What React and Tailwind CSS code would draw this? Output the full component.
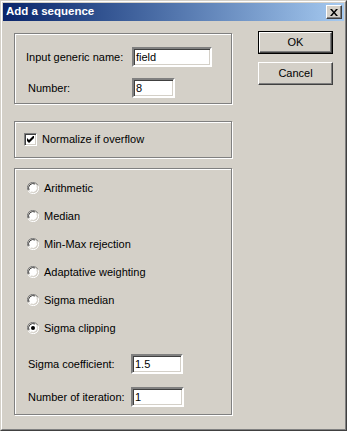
import React from 'react';

const font = { fontFamily: '"Liberation Sans", Arial, sans-serif' };

function TextBox({ value, width }) {
  return (
    <div
      className={`h-[20px] ${width} bg-white border-2 border-t-[#808080] border-l-[#808080] border-b-white border-r-white shadow-[inset_1px_1px_0_#404040,inset_-1px_-1px_0_#d4d0c8] flex items-center pl-[2px] text-[11px] text-black`}
    >
      {value}
    </div>
  );
}

function Radio({ checked, label }) {
  return (
    <div className="flex items-center h-[16px]">
      <svg width="12" height="12" viewBox="0 0 12 12" className="ml-[1px]">
        {/* outer 3D ring */}
        <path d="M1 8.5 A5.5 5.5 0 0 1 8.5 1" stroke="#808080" strokeWidth="1" fill="none" />
        <path d="M8.5 1 A5.5 5.5 0 0 1 11 3.5" stroke="#808080" strokeWidth="1" fill="none" />
        <path d="M11 3.5 A5.5 5.5 0 0 1 3.5 11" stroke="#ffffff" strokeWidth="1" fill="none" />
        <path d="M3.5 11 A5.5 5.5 0 0 1 1 8.5" stroke="#ffffff" strokeWidth="1" fill="none" />
        <circle cx="6" cy="6" r="4.5" fill="#ffffff" />
        <path d="M2 8 A4.5 4.5 0 0 1 8 2" stroke="#404040" strokeWidth="1" fill="none" />
        <path d="M10 4 A4.5 4.5 0 0 1 4 10" stroke="#d4d0c8" strokeWidth="1" fill="none" />
        {checked && <circle cx="6" cy="6" r="2" fill="#000000" />}
      </svg>
      <span className="ml-[5px] text-[11px] text-black">{label}</span>
    </div>
  );
}

function Button({ label, isDefault }) {
  return (
    <div className={`w-[75px] h-[23px] ${isDefault ? 'border border-black' : ''}`}>
      <div className="w-full h-full bg-[#d4d0c8] border border-t-white border-l-white border-b-[#404040] border-r-[#404040] shadow-[inset_-1px_-1px_0_#808080] flex items-center justify-center text-[11px] text-black">
        {label}
      </div>
    </div>
  );
}

export default function App() {
  const radios = ['Arithmetic', 'Median', 'Min-Max rejection', 'Adaptative weighting', 'Sigma median', 'Sigma clipping'];

  return (
    <div style={font} className="w-[347px] h-[431px] bg-[#d4d0c8] select-none">
      <div className="w-full h-full border border-t-[#d4d0c8] border-l-[#d4d0c8] border-b-[#404040] border-r-[#404040]">
        <div className="w-full h-full border border-t-white border-l-white border-b-[#808080] border-r-[#808080] p-px flex flex-col">
          {/* Title bar */}
          <div className="h-[18px] bg-gradient-to-r from-[#0a246a] to-[#a6caf0] flex items-center justify-between pl-[3px] pr-[2px]">
            <span className="text-white font-bold text-[11.5px] leading-none">Add a sequence</span>
            <div className="w-[16px] h-[14px] bg-[#d4d0c8] border border-t-white border-l-white border-b-[#404040] border-r-[#404040] shadow-[inset_-1px_-1px_0_#808080] flex items-center justify-center">
              <svg width="8" height="7" viewBox="0 0 8 7">
                <path d="M0 0h2l2 2.5L6 0h2L5 3.5 8 7H6L4 4.5 2 7H0l3-3.5z" fill="#000" />
              </svg>
            </div>
          </div>

          {/* Body */}
          <div className="flex pl-[11px] pt-[12px]">
            <div className="flex flex-col w-[218px]">
              {/* Group 1 */}
              <div className="h-[71px] border border-[#808080] shadow-[inset_1px_1px_0_#fff,1px_1px_0_#fff] pt-[13px] pl-[11px] flex flex-col gap-[11px]">
                <div className="flex items-center">
                  <span className="w-[106px] text-[11px] text-black">Input generic name:</span>
                  <TextBox value="field" width="w-[80px]" />
                </div>
                <div className="flex items-center">
                  <span className="w-[104px] ml-[2px] text-[11px] text-black">Number:</span>
                  <TextBox value="8" width="w-[43px]" />
                </div>
              </div>

              {/* Group 2 */}
              <div className="mt-[17px] h-[37px] border border-[#808080] shadow-[inset_1px_1px_0_#fff,1px_1px_0_#fff] flex items-center pl-[9px]">
                <div className="w-[13px] h-[13px] bg-white border border-t-[#808080] border-l-[#808080] border-b-white border-r-white shadow-[inset_1px_1px_0_#404040,inset_-1px_-1px_0_#d4d0c8] flex items-center justify-center">
                  <svg width="7" height="7" viewBox="0 0 7 7">
                    <path d="M0 2v3l2 2 5-5V-1L2 4z" fill="#000" />
                  </svg>
                </div>
                <span className="ml-[5px] text-[11px] text-black">Normalize if overflow</span>
              </div>

              {/* Group 3 */}
              <div className="mt-[10px] h-[247px] border border-[#808080] shadow-[inset_1px_1px_0_#fff,1px_1px_0_#fff] pt-[11px] pl-[11px] flex flex-col">
                <div className="flex flex-col gap-[12px]">
                  {radios.map((r, i) => (
                    <Radio key={r} label={r} checked={i === 5} />
                  ))}
                </div>
                <div className="mt-[18px] flex flex-col gap-[13px] pl-[2px]">
                  <div className="flex items-center">
                    <span className="w-[103px] text-[11px] text-black">Sigma coefficient:</span>
                    <TextBox value="1.5" width="w-[52px]" />
                  </div>
                  <div className="flex items-center">
                    <span className="w-[103px] text-[11px] text-black">Number of iteration:</span>
                    <TextBox value="1" width="w-[53px]" />
                  </div>
                </div>
              </div>
            </div>

            {/* Buttons */}
            <div className="ml-[26px] flex flex-col gap-[8px] -mt-[2px]">
              <Button label="OK" isDefault />
              <Button label="Cancel" />
            </div>
          </div>
        </div>
      </div>
    </div>
  );
}
